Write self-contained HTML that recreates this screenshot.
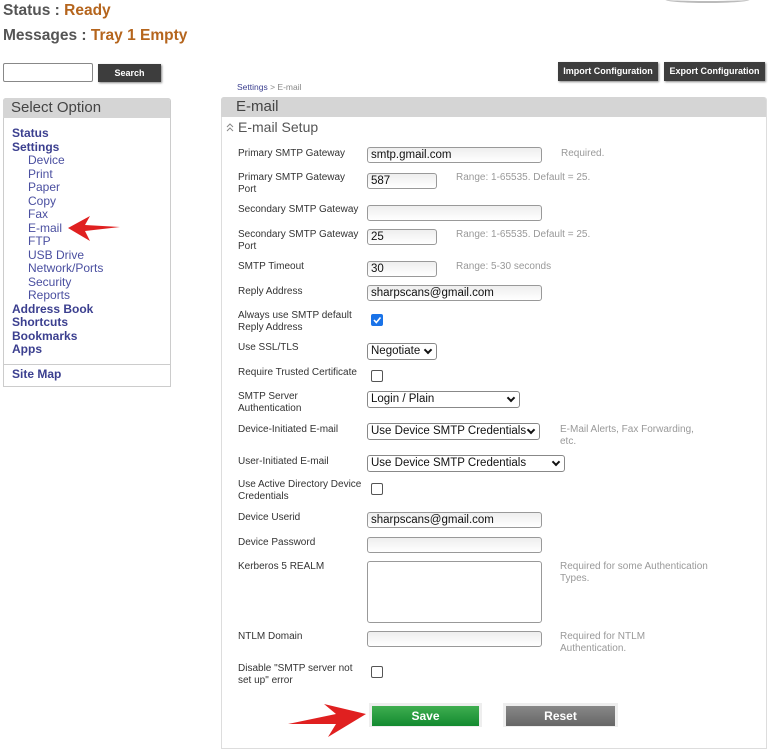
<!DOCTYPE html>
<html><head><meta charset="utf-8"><style>
body{margin:0;width:768px;height:753px;background:#fff;font-family:"Liberation Sans",Arial,sans-serif;position:relative;overflow:hidden}
.a{position:absolute;white-space:nowrap}
.l{position:absolute;font-size:10px;color:#333;line-height:12px;left:238px}
.n{position:absolute;font-size:10px;color:#999;line-height:12px;left:560px}
.n2{left:456px}
.in{position:absolute;left:367px;height:14px;border:1px solid #999;border-radius:3px;background:linear-gradient(#eee,#fff);font-size:11.5px;line-height:14px;padding-left:3px;color:#111;box-sizing:content-box}
.sel{position:absolute;left:367px;height:15px;border:1px solid #888;border-radius:3px;background:#fff;font-size:11.5px;line-height:15px;padding-left:3px;color:#111}
.sel:after{content:"";position:absolute;right:5px;top:3px;width:4px;height:4px;border-right:2px solid #111;border-bottom:2px solid #111;transform:rotate(45deg)}
.cb{position:absolute;left:371px;width:10px;height:10px;border:1px solid #555;border-radius:2px;background:#fff}
.side{position:absolute;left:12px;font-size:12px;line-height:13.5px;color:#3b3f8f}
.side b{display:block}
.side span{display:block;padding-left:16px;color:#4a4fa0}
.btn{position:absolute;background:#3d3d3d;color:#fff;font-size:9px;font-weight:bold;text-align:center;box-shadow:1px 1px 2px #888}
</style></head><body>
<div class="a" style="left:3px;top:2px;font-size:15.5px;font-weight:bold;color:#555">Status : <span style="color:#b5651d">Ready</span></div>
<div class="a" style="left:3px;top:27px;font-size:15.5px;font-weight:bold;color:#555">Messages : <span style="color:#b5651d">Tray 1 Empty</span></div>
<div class="a" style="left:665px;top:-4px;width:85px;height:5px;border-bottom:2px solid #bbb;border-radius:0 0 50% 50%"></div>

<div class="a" style="left:3px;top:63px;width:88px;height:17px;border:1px solid #888;border-radius:2px"></div>
<div class="btn" style="left:98px;top:64px;width:63px;height:18px;line-height:18px">Search</div>
<div class="btn" style="left:558px;top:62px;width:100px;height:19px;line-height:19px">Import Configuration</div>
<div class="btn" style="left:664px;top:62px;width:101px;height:19px;line-height:19px">Export Configuration</div>

<div class="a" style="left:3px;top:98px;width:166px;height:287px;border:1px solid #ccc;border-radius:3px 3px 0 0"></div>
<div class="a" style="left:3px;top:98px;width:167px;height:20px;background:#d5d5d5;border-radius:3px 3px 0 0;font-size:15px;line-height:20px;color:#444;text-indent:8px">Select Option</div>
<div class="side" style="top:127px"><b>Status</b><b>Settings</b><span>Device</span><span>Print</span><span>Paper</span><span>Copy</span><span>Fax</span><span>E-mail</span><span>FTP</span><span>USB Drive</span><span>Network/Ports</span><span>Security</span><span>Reports</span><b>Address Book</b><b>Shortcuts</b><b>Bookmarks</b><b>Apps</b></div>
<div class="a" style="left:4px;top:364px;width:166px;border-top:1px solid #ccc"></div>
<div class="side" style="top:368px"><b>Site Map</b></div>

<svg class="a" style="left:64px;top:214px" width="58" height="30"><path d="M4 14 L26 2 L21 11 L56 13 L21 17 L26 27 Z" fill="#e02020"/></svg>

<div class="a" style="left:237px;top:82px;font-size:8.5px;color:#888"><span style="color:#3b3f8f">Settings</span> &gt; E-mail</div>
<div class="a" style="left:221px;top:97px;width:544px;height:650px;border:1px solid #ddd;border-radius:3px 3px 0 0"></div>
<div class="a" style="left:221px;top:97px;width:545px;height:20px;background:#d5d5d5;border-radius:3px 3px 0 0;font-size:15px;line-height:20px;color:#444;text-indent:15px">E-mail</div>
<svg class="a" style="left:226px;top:123px" width="8" height="9"><path d="M1 4 L4 1 L7 4 M1 8 L4 5 L7 8" stroke="#888" stroke-width="1" fill="none"/></svg>
<div class="a" style="left:238px;top:119px;font-size:14px;color:#555">E-mail Setup</div>

<div class="l" style="top:148px">Primary SMTP Gateway</div><div class="in" style="top:147px;width:170px">smtp.gmail.com</div><div class="n" style="top:148px;left:561px">Required.</div>
<div class="l" style="top:172px">Primary SMTP Gateway<br>Port</div><div class="in" style="top:173px;width:65px">587</div><div class="n n2" style="top:172px">Range: 1-65535. Default = 25.</div>
<div class="l" style="top:204px">Secondary SMTP Gateway</div><div class="in" style="top:205px;width:170px"></div>
<div class="l" style="top:229px">Secondary SMTP Gateway<br>Port</div><div class="in" style="top:229px;width:65px">25</div><div class="n n2" style="top:229px">Range: 1-65535. Default = 25.</div>
<div class="l" style="top:261px">SMTP Timeout</div><div class="in" style="top:261px;width:65px">30</div><div class="n n2" style="top:261px">Range: 5-30 seconds</div>
<div class="l" style="top:286px">Reply Address</div><div class="in" style="top:285px;width:170px">sharpscans@gmail.com</div>
<div class="l" style="top:310px">Always use SMTP default<br>Reply Address</div>
<div class="cb" style="top:314px;background:#1a73e8;border-color:#1a73e8"><svg width="10" height="10" style="display:block"><path d="M2 5 L4.3 7.5 L8.5 2.5" stroke="#fff" stroke-width="1.6" fill="none"/></svg></div>
<div class="l" style="top:342px">Use SSL/TLS</div><div class="sel" style="top:343px;width:65px">Negotiate</div>
<div class="l" style="top:367px">Require Trusted Certificate</div><div class="cb" style="top:370px"></div>
<div class="l" style="top:391px">SMTP Server<br>Authentication</div><div class="sel" style="top:391px;width:148px">Login / Plain</div>
<div class="l" style="top:424px">Device-Initiated E-mail</div><div class="sel" style="top:423px;width:168px">Use Device SMTP Credentials</div><div class="n" style="top:424px">E-Mail Alerts, Fax Forwarding,<br>etc.</div>
<div class="l" style="top:456px">User-Initiated E-mail</div><div class="sel" style="top:455px;width:193px">Use Device SMTP Credentials</div>
<div class="l" style="top:479px">Use Active Directory Device<br>Credentials</div><div class="cb" style="top:483px"></div>
<div class="l" style="top:512px">Device Userid</div><div class="in" style="top:512px;width:170px">sharpscans@gmail.com</div>
<div class="l" style="top:537px">Device Password</div><div class="in" style="top:537px;width:170px"></div>
<div class="l" style="top:561px">Kerberos 5 REALM</div><div class="in" style="top:561px;width:170px;height:60px;background:#fff"></div><div class="n" style="top:561px">Required for some Authentication<br>Types.</div>
<div class="l" style="top:631px">NTLM Domain</div><div class="in" style="top:631px;width:170px"></div><div class="n" style="top:631px">Required for NTLM<br>Authentication.</div>
<div class="l" style="top:663px">Disable "SMTP server not<br>set up" error</div><div class="cb" style="top:666px"></div>

<div class="a" style="left:369px;top:703px;width:113px;height:24px;background:#eee"></div>
<div class="a" style="left:372px;top:706px;width:107px;height:20px;background:linear-gradient(#3fae50,#138a30);color:#fff;font-weight:bold;font-size:12px;line-height:20px;text-align:center">Save</div>
<div class="a" style="left:503px;top:703px;width:115px;height:24px;background:#eee"></div>
<div class="a" style="left:506px;top:706px;width:109px;height:20px;background:linear-gradient(#888,#666);color:#fff;font-weight:bold;font-size:12px;line-height:20px;text-align:center">Reset</div>
<svg class="a" style="left:286px;top:700px" width="82" height="40"><path d="M2 24 L50 14 L38 4 L80 14 L42 37 L50 24 Z" fill="#e02020"/></svg>
</body></html>
